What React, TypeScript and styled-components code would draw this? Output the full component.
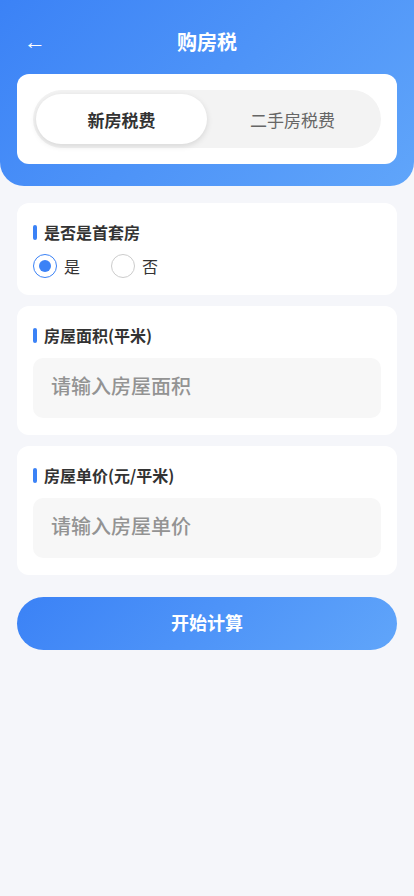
import React, { useState } from "react";
import styled, { createGlobalStyle } from "styled-components";

const GlobalStyle = createGlobalStyle`
  html, body {
    margin: 0;
    padding: 0;
    background: #f5f6fa;
    font-family: "Noto Sans CJK SC", "Noto Sans", sans-serif;
  }
  * { box-sizing: border-box; }
`;

const Page = styled.div`
  min-height: 896px;
  background: #f5f6fa;
`;

const Header = styled.div`
  background: linear-gradient(135deg, #3b82f6 0%, #60a5fa 100%);
  border-radius: 0 0 24px 24px;
  padding: 22px 17px 22px;
`;

const TopBar = styled.div`
  position: relative;
  height: 38px;
  display: flex;
  align-items: center;
  justify-content: center;
  margin-bottom: 14px;
`;

const Back = styled.span`
  position: absolute;
  left: 7px;
  top: 50%;
  transform: translateY(-45%);
  color: #fff;
  font-size: 22px;
  font-family: "Liberation Sans", sans-serif;
  line-height: 1;
`;

const Title = styled.h1`
  margin: 0;
  color: #fff;
  font-size: 20px;
  font-weight: 700;
`;

const TabCard = styled.div`
  background: #fff;
  border-radius: 12px;
  padding: 16px;
`;

const Tabs = styled.div`
  display: flex;
  background: #f3f3f3;
  border-radius: 29px;
  padding: 4px 3px;
  height: 58px;
`;

const Tab = styled.button<{ $active: boolean }>`
  flex: 1;
  border: none;
  border-radius: 25px;
  font-family: inherit;
  font-size: 17px;
  background: ${(p) => (p.$active ? "#fff" : "transparent")};
  color: ${(p) => (p.$active ? "#333" : "#666")};
  font-weight: ${(p) => (p.$active ? 700 : 400)};
  box-shadow: ${(p) => (p.$active ? "0 2px 6px rgba(0,0,0,0.12)" : "none")};
  cursor: pointer;
`;

const Body = styled.div`
  padding: 17px 17px;
  display: flex;
  flex-direction: column;
  gap: 11px;
`;

const Card = styled.div`
  background: #fff;
  border-radius: 12px;
  padding: 18px 16px 17px;
  display: flex;
  flex-direction: column;
  gap: 11px;
`;

const Label = styled.div`
  display: flex;
  align-items: center;
  gap: 7px;
  font-size: 16px;
  font-weight: 700;
  color: #333;
  line-height: 22px;
  &::before {
    content: "";
    width: 4px;
    height: 15px;
    border-radius: 2px;
    background: #3b82f6;
  }
`;

const RadioRow = styled.div`
  display: flex;
  gap: 31px;
`;

const RadioItem = styled.label`
  display: flex;
  align-items: center;
  gap: 7px;
  font-size: 16px;
  color: #333;
  cursor: pointer;
`;

const Circle = styled.span<{ $on: boolean }>`
  width: 24px;
  height: 24px;
  border-radius: 50%;
  border: 1.5px solid ${(p) => (p.$on ? "#3b82f6" : "#ccc")};
  display: flex;
  align-items: center;
  justify-content: center;
  &::after {
    content: "";
    width: 12px;
    height: 12px;
    border-radius: 50%;
    background: ${(p) => (p.$on ? "#3b82f6" : "transparent")};
  }
`;

const Input = styled.input`
  height: 60px;
  border: none;
  outline: none;
  border-radius: 10px;
  background: #f7f7f7;
  padding: 0 18px 5px;
  font-family: inherit;
  font-size: 20px;
  font-weight: 500;
  color: #333;
  margin-top: 1px;
  &::placeholder {
    color: #939393;
  }
`;

const CalcButton = styled.button`
  margin-top: 11px;
  height: 53px;
  border: none;
  border-radius: 27px;
  background: linear-gradient(135deg, #3b82f6 0%, #60a5fa 100%);
  color: #fff;
  font-family: inherit;
  font-size: 18px;
  font-weight: 700;
  padding-bottom: 5px;
  cursor: pointer;
`;

export default function App() {
  const [tab, setTab] = useState(0);
  const [first, setFirst] = useState(true);

  return (
    <Page>
      <GlobalStyle />
      <Header>
        <TopBar>
          <Back>←</Back>
          <Title>购房税</Title>
        </TopBar>
        <TabCard>
          <Tabs>
            <Tab $active={tab === 0} onClick={() => setTab(0)}>新房税费</Tab>
            <Tab $active={tab === 1} onClick={() => setTab(1)}>二手房税费</Tab>
          </Tabs>
        </TabCard>
      </Header>
      <Body>
        <Card>
          <Label>是否是首套房</Label>
          <RadioRow>
            <RadioItem onClick={() => setFirst(true)}>
              <Circle $on={first} />是
            </RadioItem>
            <RadioItem onClick={() => setFirst(false)}>
              <Circle $on={!first} />否
            </RadioItem>
          </RadioRow>
        </Card>
        <Card>
          <Label>房屋面积(平米)</Label>
          <Input placeholder="请输入房屋面积" />
        </Card>
        <Card>
          <Label>房屋单价(元/平米)</Label>
          <Input placeholder="请输入房屋单价" />
        </Card>
        <CalcButton>开始计算</CalcButton>
      </Body>
    </Page>
  );
}
